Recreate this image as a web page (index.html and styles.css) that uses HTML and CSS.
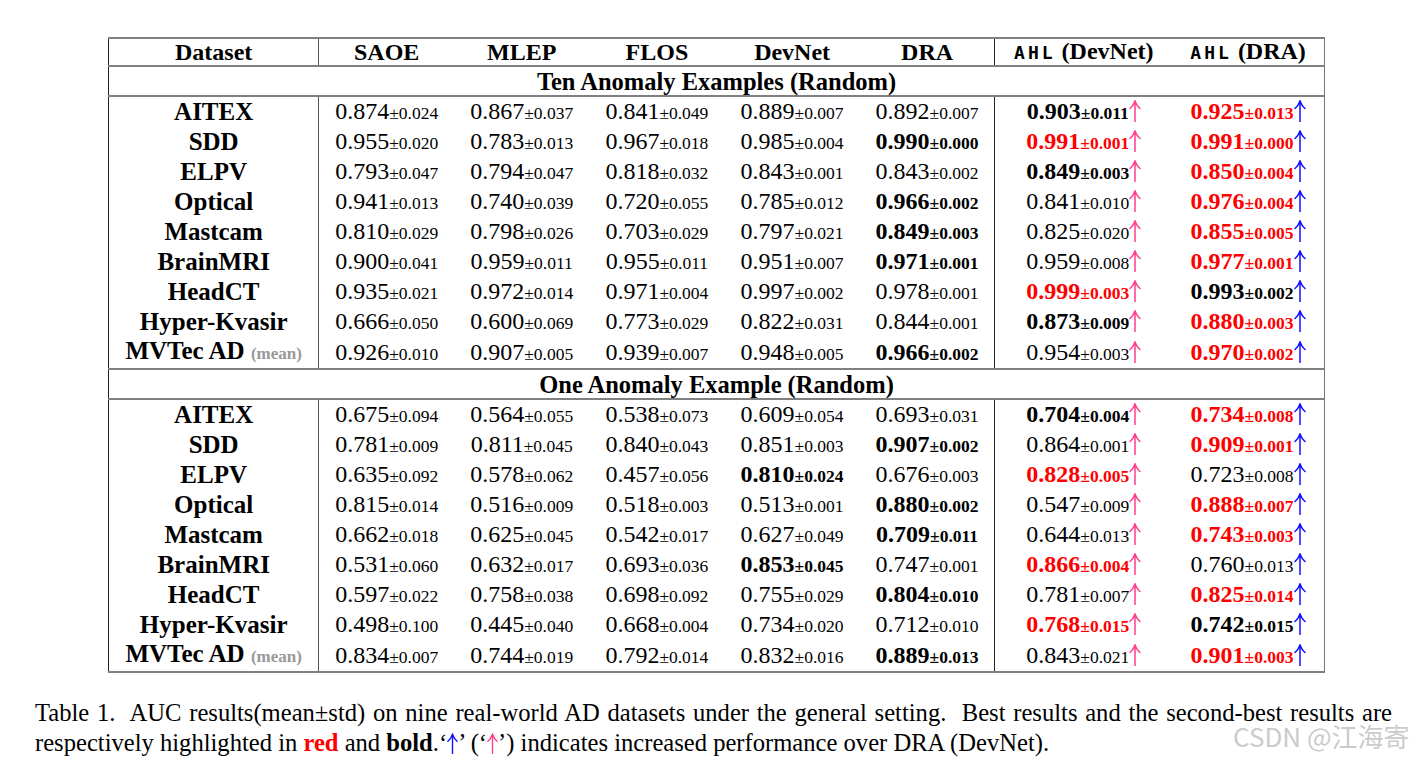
FILE: index.html
```html
<!DOCTYPE html>
<html>
<head>
<meta charset="utf-8">
<link rel="stylesheet" href="styles.css">
</head>
<body>
<div class="page">
<svg width="0" height="0" class="defs">
<defs>
<symbol id="up" viewBox="0 0 12 22"><path d="M6 22 V1.5 M1 8.5 Q4.2 6 6 1 Q7.8 6 11 8.5" fill="none" stroke="currentColor" stroke-width="1.5" stroke-linecap="round"/></symbol>
</defs>
</svg>
<table class="res">
<colgroup>
<col class="c-ds"><col class="c-n"><col class="c-n"><col class="c-n"><col class="c-n"><col class="c-n"><col class="c-a1"><col class="c-a2">
</colgroup>
<thead>
<tr class="hd">
<th class="ds">Dataset</th><th>SAOE</th><th>MLEP</th><th>FLOS</th><th>DevNet</th><th class="sep">DRA</th>
<th><span class="tt">AHL</span> (DevNet)</th><th><span class="tt">AHL</span> (DRA)</th>
</tr>
</thead>
<tbody>
<tr class="sec"><td colspan="8">Ten Anomaly Examples (Random)</td></tr>
<tr class="first"><td class="ds">AITEX</td><td><span class="m">0.874</span><span class="s">±0.024</span></td><td><span class="m">0.867</span><span class="s">±0.037</span></td><td><span class="m">0.841</span><span class="s">±0.049</span></td><td><span class="m">0.889</span><span class="s">±0.007</span></td><td class="sep"><span class="m">0.892</span><span class="s">±0.007</span></td><td class="b"><span class="m">0.903</span><span class="s">±0.011</span><svg class="ar ap"><use href="#up"/></svg></td><td class="r"><span class="m">0.925</span><span class="s">±0.013</span><svg class="ar ab"><use href="#up"/></svg></td></tr>
<tr><td class="ds">SDD</td><td><span class="m">0.955</span><span class="s">±0.020</span></td><td><span class="m">0.783</span><span class="s">±0.013</span></td><td><span class="m">0.967</span><span class="s">±0.018</span></td><td><span class="m">0.985</span><span class="s">±0.004</span></td><td class="sep b"><span class="m">0.990</span><span class="s">±0.000</span></td><td class="r"><span class="m">0.991</span><span class="s">±0.001</span><svg class="ar ap"><use href="#up"/></svg></td><td class="r"><span class="m">0.991</span><span class="s">±0.000</span><svg class="ar ab"><use href="#up"/></svg></td></tr>
<tr><td class="ds">ELPV</td><td><span class="m">0.793</span><span class="s">±0.047</span></td><td><span class="m">0.794</span><span class="s">±0.047</span></td><td><span class="m">0.818</span><span class="s">±0.032</span></td><td><span class="m">0.843</span><span class="s">±0.001</span></td><td class="sep"><span class="m">0.843</span><span class="s">±0.002</span></td><td class="b"><span class="m">0.849</span><span class="s">±0.003</span><svg class="ar ap"><use href="#up"/></svg></td><td class="r"><span class="m">0.850</span><span class="s">±0.004</span><svg class="ar ab"><use href="#up"/></svg></td></tr>
<tr><td class="ds">Optical</td><td><span class="m">0.941</span><span class="s">±0.013</span></td><td><span class="m">0.740</span><span class="s">±0.039</span></td><td><span class="m">0.720</span><span class="s">±0.055</span></td><td><span class="m">0.785</span><span class="s">±0.012</span></td><td class="sep b"><span class="m">0.966</span><span class="s">±0.002</span></td><td><span class="m">0.841</span><span class="s">±0.010</span><svg class="ar ap"><use href="#up"/></svg></td><td class="r"><span class="m">0.976</span><span class="s">±0.004</span><svg class="ar ab"><use href="#up"/></svg></td></tr>
<tr><td class="ds">Mastcam</td><td><span class="m">0.810</span><span class="s">±0.029</span></td><td><span class="m">0.798</span><span class="s">±0.026</span></td><td><span class="m">0.703</span><span class="s">±0.029</span></td><td><span class="m">0.797</span><span class="s">±0.021</span></td><td class="sep b"><span class="m">0.849</span><span class="s">±0.003</span></td><td><span class="m">0.825</span><span class="s">±0.020</span><svg class="ar ap"><use href="#up"/></svg></td><td class="r"><span class="m">0.855</span><span class="s">±0.005</span><svg class="ar ab"><use href="#up"/></svg></td></tr>
<tr><td class="ds">BrainMRI</td><td><span class="m">0.900</span><span class="s">±0.041</span></td><td><span class="m">0.959</span><span class="s">±0.011</span></td><td><span class="m">0.955</span><span class="s">±0.011</span></td><td><span class="m">0.951</span><span class="s">±0.007</span></td><td class="sep b"><span class="m">0.971</span><span class="s">±0.001</span></td><td><span class="m">0.959</span><span class="s">±0.008</span><svg class="ar ap"><use href="#up"/></svg></td><td class="r"><span class="m">0.977</span><span class="s">±0.001</span><svg class="ar ab"><use href="#up"/></svg></td></tr>
<tr><td class="ds">HeadCT</td><td><span class="m">0.935</span><span class="s">±0.021</span></td><td><span class="m">0.972</span><span class="s">±0.014</span></td><td><span class="m">0.971</span><span class="s">±0.004</span></td><td><span class="m">0.997</span><span class="s">±0.002</span></td><td class="sep"><span class="m">0.978</span><span class="s">±0.001</span></td><td class="r"><span class="m">0.999</span><span class="s">±0.003</span><svg class="ar ap"><use href="#up"/></svg></td><td class="b"><span class="m">0.993</span><span class="s">±0.002</span><svg class="ar ab"><use href="#up"/></svg></td></tr>
<tr><td class="ds">Hyper-Kvasir</td><td><span class="m">0.666</span><span class="s">±0.050</span></td><td><span class="m">0.600</span><span class="s">±0.069</span></td><td><span class="m">0.773</span><span class="s">±0.029</span></td><td><span class="m">0.822</span><span class="s">±0.031</span></td><td class="sep"><span class="m">0.844</span><span class="s">±0.001</span></td><td class="b"><span class="m">0.873</span><span class="s">±0.009</span><svg class="ar ap"><use href="#up"/></svg></td><td class="r"><span class="m">0.880</span><span class="s">±0.003</span><svg class="ar ab"><use href="#up"/></svg></td></tr>
<tr class="last"><td class="ds">MVTec AD <span class="mean">(mean)</span></td><td><span class="m">0.926</span><span class="s">±0.010</span></td><td><span class="m">0.907</span><span class="s">±0.005</span></td><td><span class="m">0.939</span><span class="s">±0.007</span></td><td><span class="m">0.948</span><span class="s">±0.005</span></td><td class="sep b"><span class="m">0.966</span><span class="s">±0.002</span></td><td><span class="m">0.954</span><span class="s">±0.003</span><svg class="ar ap"><use href="#up"/></svg></td><td class="r"><span class="m">0.970</span><span class="s">±0.002</span><svg class="ar ab"><use href="#up"/></svg></td></tr>
<tr class="sec"><td colspan="8">One Anomaly Example (Random)</td></tr>
<tr class="first"><td class="ds">AITEX</td><td><span class="m">0.675</span><span class="s">±0.094</span></td><td><span class="m">0.564</span><span class="s">±0.055</span></td><td><span class="m">0.538</span><span class="s">±0.073</span></td><td><span class="m">0.609</span><span class="s">±0.054</span></td><td class="sep"><span class="m">0.693</span><span class="s">±0.031</span></td><td class="b"><span class="m">0.704</span><span class="s">±0.004</span><svg class="ar ap"><use href="#up"/></svg></td><td class="r"><span class="m">0.734</span><span class="s">±0.008</span><svg class="ar ab"><use href="#up"/></svg></td></tr>
<tr><td class="ds">SDD</td><td><span class="m">0.781</span><span class="s">±0.009</span></td><td><span class="m">0.811</span><span class="s">±0.045</span></td><td><span class="m">0.840</span><span class="s">±0.043</span></td><td><span class="m">0.851</span><span class="s">±0.003</span></td><td class="sep b"><span class="m">0.907</span><span class="s">±0.002</span></td><td><span class="m">0.864</span><span class="s">±0.001</span><svg class="ar ap"><use href="#up"/></svg></td><td class="r"><span class="m">0.909</span><span class="s">±0.001</span><svg class="ar ab"><use href="#up"/></svg></td></tr>
<tr><td class="ds">ELPV</td><td><span class="m">0.635</span><span class="s">±0.092</span></td><td><span class="m">0.578</span><span class="s">±0.062</span></td><td><span class="m">0.457</span><span class="s">±0.056</span></td><td class="b"><span class="m">0.810</span><span class="s">±0.024</span></td><td class="sep"><span class="m">0.676</span><span class="s">±0.003</span></td><td class="r"><span class="m">0.828</span><span class="s">±0.005</span><svg class="ar ap"><use href="#up"/></svg></td><td><span class="m">0.723</span><span class="s">±0.008</span><svg class="ar ab"><use href="#up"/></svg></td></tr>
<tr><td class="ds">Optical</td><td><span class="m">0.815</span><span class="s">±0.014</span></td><td><span class="m">0.516</span><span class="s">±0.009</span></td><td><span class="m">0.518</span><span class="s">±0.003</span></td><td><span class="m">0.513</span><span class="s">±0.001</span></td><td class="sep b"><span class="m">0.880</span><span class="s">±0.002</span></td><td><span class="m">0.547</span><span class="s">±0.009</span><svg class="ar ap"><use href="#up"/></svg></td><td class="r"><span class="m">0.888</span><span class="s">±0.007</span><svg class="ar ab"><use href="#up"/></svg></td></tr>
<tr><td class="ds">Mastcam</td><td><span class="m">0.662</span><span class="s">±0.018</span></td><td><span class="m">0.625</span><span class="s">±0.045</span></td><td><span class="m">0.542</span><span class="s">±0.017</span></td><td><span class="m">0.627</span><span class="s">±0.049</span></td><td class="sep b"><span class="m">0.709</span><span class="s">±0.011</span></td><td><span class="m">0.644</span><span class="s">±0.013</span><svg class="ar ap"><use href="#up"/></svg></td><td class="r"><span class="m">0.743</span><span class="s">±0.003</span><svg class="ar ab"><use href="#up"/></svg></td></tr>
<tr><td class="ds">BrainMRI</td><td><span class="m">0.531</span><span class="s">±0.060</span></td><td><span class="m">0.632</span><span class="s">±0.017</span></td><td><span class="m">0.693</span><span class="s">±0.036</span></td><td class="b"><span class="m">0.853</span><span class="s">±0.045</span></td><td class="sep"><span class="m">0.747</span><span class="s">±0.001</span></td><td class="r"><span class="m">0.866</span><span class="s">±0.004</span><svg class="ar ap"><use href="#up"/></svg></td><td><span class="m">0.760</span><span class="s">±0.013</span><svg class="ar ab"><use href="#up"/></svg></td></tr>
<tr><td class="ds">HeadCT</td><td><span class="m">0.597</span><span class="s">±0.022</span></td><td><span class="m">0.758</span><span class="s">±0.038</span></td><td><span class="m">0.698</span><span class="s">±0.092</span></td><td><span class="m">0.755</span><span class="s">±0.029</span></td><td class="sep b"><span class="m">0.804</span><span class="s">±0.010</span></td><td><span class="m">0.781</span><span class="s">±0.007</span><svg class="ar ap"><use href="#up"/></svg></td><td class="r"><span class="m">0.825</span><span class="s">±0.014</span><svg class="ar ab"><use href="#up"/></svg></td></tr>
<tr><td class="ds">Hyper-Kvasir</td><td><span class="m">0.498</span><span class="s">±0.100</span></td><td><span class="m">0.445</span><span class="s">±0.040</span></td><td><span class="m">0.668</span><span class="s">±0.004</span></td><td><span class="m">0.734</span><span class="s">±0.020</span></td><td class="sep"><span class="m">0.712</span><span class="s">±0.010</span></td><td class="r"><span class="m">0.768</span><span class="s">±0.015</span><svg class="ar ap"><use href="#up"/></svg></td><td class="b"><span class="m">0.742</span><span class="s">±0.015</span><svg class="ar ab"><use href="#up"/></svg></td></tr>
<tr class="last"><td class="ds">MVTec AD <span class="mean">(mean)</span></td><td><span class="m">0.834</span><span class="s">±0.007</span></td><td><span class="m">0.744</span><span class="s">±0.019</span></td><td><span class="m">0.792</span><span class="s">±0.014</span></td><td><span class="m">0.832</span><span class="s">±0.016</span></td><td class="sep b"><span class="m">0.889</span><span class="s">±0.013</span></td><td><span class="m">0.843</span><span class="s">±0.021</span><svg class="ar ap"><use href="#up"/></svg></td><td class="r"><span class="m">0.901</span><span class="s">±0.003</span><svg class="ar ab"><use href="#up"/></svg></td></tr>
</tbody>
</table>
<p class="caption">Table 1.&nbsp; AUC results(mean±std) on nine real-world AD datasets under the general setting.&nbsp; Best results and the second-best results are respectively highlighted in <span class="red">red</span> and <b>bold</b>.‘<svg class="car ab"><use href="#up"/></svg>’ (‘<svg class="car ap"><use href="#up"/></svg>’) indicates increased performance over DRA (DevNet).</p>
<div class="wm">CSDN @江海寄</div>
</div>
</body>
</html>
```
FILE: styles.css
```css
html, body {
  margin: 0;
  padding: 0;
  background: #ffffff;
}
.defs {
  position: absolute;
  width: 0;
  height: 0;
}
.page {
  position: relative;
  width: 1420px;
  height: 763px;
  padding-top: 37px;
  box-sizing: border-box;
  font-family: "Liberation Serif", "Times New Roman", serif;
  color: #000;
}
.res {
  margin-left: 108px;
  width: 1217px;
  border-collapse: collapse;
  table-layout: fixed;
  border-left: 1px solid #222;
  border-right: 1px solid #777;
}
.c-ds { width: 210px; }
.c-n { width: 135px; }
.c-a1 { width: 177px; }
.c-a2 { width: 152px; }
.res th, .res td {
  padding: 0;
  height: 30px;
  line-height: 28px;
  text-align: center;
  white-space: nowrap;
  font-size: 24px;
}
.res th {
  height: 25px;
  line-height: 24px;
  font-weight: bold;
  border-top: 2px solid #808080;
}
.res th.ds, .res td.ds {
  border-right: 1px solid #555;
  font-weight: bold;
  font-size: 25px;
}
.res th.ds { font-size: 24px; }
.res th.sep, .res td.sep {
  border-right: 1px solid #222;
}
.res tr.sec td {
  height: 28px;
  line-height: 27px;
  border-top: 2px solid #808080;
  font-weight: bold;
  font-size: 24.5px;
}
.res tr.first td {
  height: 28px;
  border-top: 2px solid #808080;
}
.res tr.last td {
  height: 28px;
}
.res tbody tr:last-child td {
  border-bottom: 2px solid #808080;
}
.tt {
  font-family: "DejaVu Sans Mono", "Liberation Mono", monospace;
  font-weight: bold;
  font-size: 18px;
  letter-spacing: 3px;
}
.m { font-size: 24px; }
.s { font-size: 17.5px; }
.b { font-weight: bold; }
.r { font-weight: bold; color: #ff0000; }
.ar {
  width: 12px;
  height: 22px;
  vertical-align: -3px;
}
.car {
  width: 11px;
  height: 21px;
  vertical-align: -3px;
}
.ap { color: #ff3d8f; }
.ab { color: #1010ff; }
.mean {
  font-size: 17px;
  color: #999;
}
.caption {
  margin: 25px 0 0 35px;
  width: 1357px;
  font-size: 24.6px;
  line-height: 30px;
  text-align: justify;
}
.red { color: #ff0000; font-weight: bold; }
.wm {
  position: absolute;
  left: 1233px;
  top: 720px;
  font-family: "Noto Sans CJK SC", "Noto Sans", sans-serif;
  font-size: 26px;
  line-height: 32px;
  color: #cbcbcb;
}
```
